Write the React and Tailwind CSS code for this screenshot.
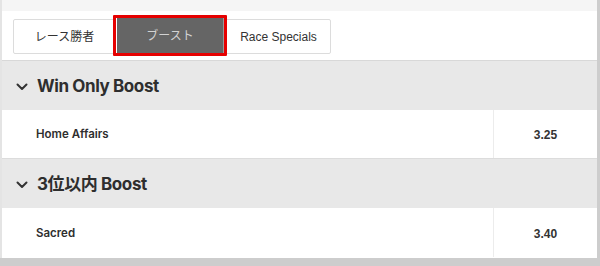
import React from "react";

function Chevron() {
  return (
    <svg width="12" height="8" viewBox="0 0 12 8" className="shrink-0">
      <path d="M1.5 1.5 L6 6 L10.5 1.5" fill="none" stroke="#333" strokeWidth="2" strokeLinecap="round" strokeLinejoin="round" />
    </svg>
  );
}

function Section({ title, name, price, last }) {
  return (
    <div className="flex flex-col">
      <div className="h-[49px] bg-[#e8e8e8] flex items-center pl-[14px] gap-[9px] pt-[3px]">
        <Chevron />
        <span className="text-[17px] font-bold text-[#2e2e2e] font-['Inter','Noto_Sans_CJK_JP',sans-serif] tracking-[-0.4px]">{title}</span>
      </div>
      <div className={`h-[49px] bg-white flex pt-[2px] ${last ? "" : "border-b border-[#dcdcdc]"}`}>
        <div className="flex-1 flex items-center pl-[34px] text-[11.5px] font-semibold text-[#2e2e2e] font-['Inter',sans-serif]">{name}</div>
        <div className="w-[104px] -mt-[2px] pt-[2px] border-l border-[#ececec] flex items-center justify-center text-[12px] font-bold text-[#333] font-['Liberation_Sans',Arial,sans-serif]">{price}</div>
      </div>
    </div>
  );
}

export default function App() {
  return (
    <div className="w-[600px] h-[266px] bg-[#cdcdcd] overflow-hidden">
      <div className="w-[597px] h-[258px] bg-white border-l-2 border-[#e4e4e4] flex flex-col">
        <div className="h-[11px] bg-[#f5f5f5] shrink-0" />
        <div className="h-[49px] shrink-0 pl-[11px] pt-[8px]">
          <div className="flex h-[35px] w-[318px] border border-[#dcdcdc] rounded-[2px] font-['Liberation_Sans','Noto_Sans_CJK_JP',sans-serif] text-[12px]">
            <div className="w-[99px] flex items-center justify-center text-[#333] pl-[2px]">レース勝者</div>
            <div className="w-[114px] h-[41px] -mt-[5px] shrink-0 border-[3px] border-[#e50000] bg-[#656565] shadow-[inset_1px_0_0_#ffffff,inset_-1px_0_0_#9a9a9a] flex items-center justify-center text-[#d2d2d2] rounded-[1px]">ブースト</div>
            <div className="flex-1 flex items-center justify-center text-[#333]">Race Specials</div>
          </div>
        </div>
        <div className="border-t border-[#d8d8d8]" />
        <Section title="Win Only Boost" name="Home Affairs" price="3.25" />
        <Section title="3位以内 Boost" name="Sacred" price="3.40" last />
      </div>
    </div>
  );
}
